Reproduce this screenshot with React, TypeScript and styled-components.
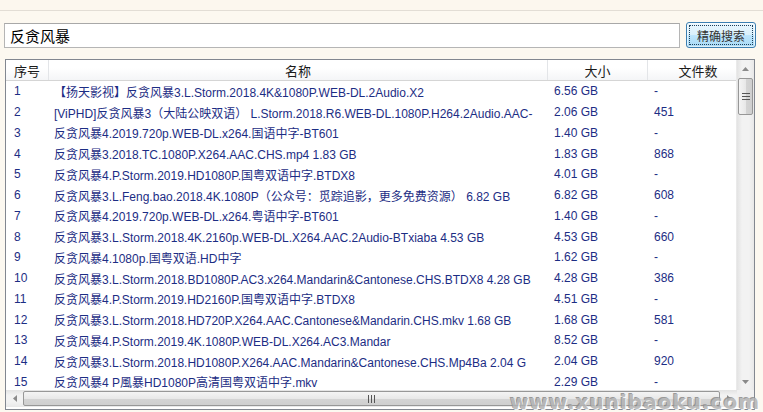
import React from "react";
import styled, { createGlobalStyle } from "styled-components";

interface ResultItem {
  name: string;
  size: string;
  files: string;
}

const results: ResultItem[] = [
  { name: "【扬天影视】反贪风暴3.L.Storm.2018.4K&1080P.WEB-DL.2Audio.X2", size: "6.56 GB", files: "-" },
  { name: "[ViPHD]反贪风暴3（大陆公映双语） L.Storm.2018.R6.WEB-DL.1080P.H264.2Audio.AAC-", size: "2.06 GB", files: "451" },
  { name: "反贪风暴4.2019.720p.WEB-DL.x264.国语中字-BT601", size: "1.40 GB", files: "-" },
  { name: "反贪风暴3.2018.TC.1080P.X264.AAC.CHS.mp4 1.83 GB", size: "1.83 GB", files: "868" },
  { name: "反贪风暴4.P.Storm.2019.HD1080P.国粤双语中字.BTDX8", size: "4.01 GB", files: "-" },
  { name: "反贪风暴3.L.Feng.bao.2018.4K.1080P（公众号：觅踪追影，更多免费资源） 6.82 GB", size: "6.82 GB", files: "608" },
  { name: "反贪风暴4.2019.720p.WEB-DL.x264.粤语中字-BT601", size: "1.40 GB", files: "-" },
  { name: "反贪风暴3.L.Storm.2018.4K.2160p.WEB-DL.X264.AAC.2Audio-BTxiaba 4.53 GB", size: "4.53 GB", files: "660" },
  { name: "反贪风暴4.1080p.国粤双语.HD中字", size: "1.62 GB", files: "-" },
  { name: "反贪风暴3.L.Storm.2018.BD1080P.AC3.x264.Mandarin&Cantonese.CHS.BTDX8 4.28 GB", size: "4.28 GB", files: "386" },
  { name: "反贪风暴4.P.Storm.2019.HD2160P.国粤双语中字.BTDX8", size: "4.51 GB", files: "-" },
  { name: "反贪风暴3.L.Storm.2018.HD720P.X264.AAC.Cantonese&Mandarin.CHS.mkv 1.68 GB", size: "1.68 GB", files: "581" },
  { name: "反贪风暴4.P.Storm.2019.4K.1080P.WEB-DL.X264.AC3.Mandar", size: "8.52 GB", files: "-" },
  { name: "反贪风暴3.L.Storm.2018.HD1080P.X264.AAC.Mandarin&Cantonese.CHS.Mp4Ba 2.04 G", size: "2.04 GB", files: "920" },
  { name: "反贪风暴4 P風暴HD1080P高清国粤双语中字.mkv", size: "2.29 GB", files: "-" },
];

const App: React.FC = () => {
  return (
    <>
      <GlobalStyle />
      <Page>
        <TopStrip />
        <SearchBar>
          <SearchInput defaultValue="反贪风暴" />
          <SearchButton>
            <FocusRing>精确搜索</FocusRing>
          </SearchButton>
        </SearchBar>
        <ListBox>
          <ListMain>
            <ListContent>
              <HeaderRow>
                <HeaderCell>序号</HeaderCell>
                <HeaderCell>名称</HeaderCell>
                <HeaderCell>大小</HeaderCell>
                <HeaderCell last>文件数</HeaderCell>
              </HeaderRow>
              {results.map((r, i) => (
                <Row key={i}>
                  <Cell>{i + 1}</Cell>
                  <Cell>{r.name}</Cell>
                  <Cell>{r.size}</Cell>
                  <Cell>{r.files}</Cell>
                </Row>
              ))}
            </ListContent>
            <VScroll>
              <ArrowBox>
                <svg width="7" height="4" viewBox="0 0 7 4">
                  <path d="M0 4 L3.5 0 L7 4 Z" fill="#8a8a8a" />
                </svg>
              </ArrowBox>
              <VThumb>
                <Grip vertical />
              </VThumb>
              <Spacer />
              <ArrowBox>
                <svg width="7" height="4" viewBox="0 0 7 4">
                  <path d="M0 0 L3.5 4 L7 0 Z" fill="#8a8a8a" />
                </svg>
              </ArrowBox>
            </VScroll>
          </ListMain>
          <HScrollRow>
            <HScroll>
              <HArrowBox>
                <svg width="4" height="7" viewBox="0 0 4 7">
                  <path d="M4 0 L0 3.5 L4 7 Z" fill="#8a8a8a" />
                </svg>
              </HArrowBox>
              <HThumb>
                <Grip />
              </HThumb>
              <HArrowBox>
                <svg width="4" height="7" viewBox="0 0 4 7">
                  <path d="M0 0 L4 3.5 L0 7 Z" fill="#8a8a8a" />
                </svg>
              </HArrowBox>
            </HScroll>
            <Corner />
          </HScrollRow>
        </ListBox>
        <Watermark>www.xunibaoku.com</Watermark>
      </Page>
    </>
  );
};

const Grip: React.FC<{ vertical?: boolean }> = ({ vertical }) =>
  vertical ? (
    <svg width="8" height="7" viewBox="0 0 8 7">
      <path d="M0 0.5 H8 M0 3.5 H8 M0 6.5 H8" stroke="#555" strokeWidth="1" />
    </svg>
  ) : (
    <svg width="7" height="8" viewBox="0 0 7 8">
      <path d="M0.5 0 V8 M3.5 0 V8 M6.5 0 V8" stroke="#555" strokeWidth="1" />
    </svg>
  );

const GlobalStyle = createGlobalStyle`
  html, body {
    margin: 0;
    padding: 0;
    background: #fcf8f0;
  }
  body {
    font-family: "Liberation Sans", "Noto Sans CJK SC", sans-serif;
  }
`;

const Page = styled.div`
  position: relative;
  width: 763px;
  height: 412px;
  overflow: hidden;
  background: #fcf8f0;
  display: flex;
  flex-direction: column;
`;

const TopStrip = styled.div`
  height: 10px;
  border-bottom: 1px solid #e2ddd5;
  background: #fcf7ee;
`;

const SearchBar = styled.div`
  display: flex;
  align-items: center;
  gap: 6px;
  padding: 11px 7px 0 4px;
`;

const SearchInput = styled.input`
  flex: 1;
  height: 25px;
  box-sizing: border-box;
  border: 1px solid #b5b5b5;
  border-top-color: #a8a8a8;
  background: #fff;
  padding: 0 5px;
  font-family: "Liberation Sans", "Noto Sans CJK SC", sans-serif;
  font-size: 15px;
  color: #000;
  outline: none;
`;

const SearchButton = styled.button`
  width: 70px;
  height: 26px;
  box-sizing: border-box;
  padding: 2px;
  border: 1px solid #3c7fb1;
  border-radius: 3px;
  background: linear-gradient(#eaf6fd 0%, #d9f0fc 50%, #bee6fd 51%, #a7d9f5 100%);
  box-shadow: inset 0 0 0 1px rgba(255, 255, 255, 0.6);
  cursor: pointer;
`;

const FocusRing = styled.span`
  display: flex;
  align-items: center;
  justify-content: center;
  height: 100%;
  box-sizing: border-box;
  border: 1px dotted #1e3f5a;
  font-family: "Noto Sans CJK SC", sans-serif;
  font-size: 12px;
  color: #333;
`;

const ListBox = styled.div`
  margin: 11px 0 0 5px;
  width: 750px;
  height: 351px;
  box-sizing: border-box;
  border: 1px solid #828790;
  background: #fff;
  display: flex;
  flex-direction: column;
`;

const ListMain = styled.div`
  flex: 1;
  display: flex;
  min-height: 0;
`;

const ListContent = styled.div`
  flex: 1;
  overflow: hidden;
  display: flex;
  flex-direction: column;
`;

const columns = "43px 499px 100px 100px";

const HeaderRow = styled.div`
  display: grid;
  grid-template-columns: ${columns};
  height: 20px;
  flex: none;
  background: linear-gradient(#ffffff 0%, #ffffff 40%, #f4f5f7 100%);
  border-bottom: 1px solid #d5d5d5;
`;

const HeaderCell = styled.div<{ last?: boolean }>`
  display: flex;
  align-items: center;
  justify-content: center;
  font-family: "Noto Sans CJK SC", sans-serif;
  font-size: 13px;
  color: #1a1a1a;
  border-right: ${({ last }) => (last ? "none" : "1px solid #e3e5e8")};
`;

const Row = styled.div`
  display: grid;
  grid-template-columns: ${columns};
  height: 20.75px;
  flex: none;
  align-items: center;
`;

const Cell = styled.div`
  padding-left: 6px;
  white-space: nowrap;
  overflow: hidden;
  font-size: 12px;
  color: #1c2d84;
  &:first-child {
    padding-left: 8px;
  }
  &:nth-child(2) {
    padding-left: 5px;
  }
`;

const VScroll = styled.div`
  width: 17px;
  flex: none;
  display: flex;
  flex-direction: column;
  background: linear-gradient(90deg, #e3e3e3, #f2f2f2 30%, #f2f2f2 70%, #e8e8e8);
  border-left: 1px solid #eaeaea;
`;

const ArrowBox = styled.div`
  height: 17px;
  display: flex;
  align-items: center;
  justify-content: center;
`;

const VThumb = styled.div`
  height: 37px;
  margin: 1px 1px 0 1px;
  box-sizing: border-box;
  border: 1px solid #979797;
  border-radius: 2px;
  background: linear-gradient(90deg, #f4f4f4 0%, #e8e8e8 50%, #d4d4d4 51%, #cfcfcf 100%);
  display: flex;
  align-items: center;
  justify-content: center;
`;

const Spacer = styled.div`
  flex: 1;
`;

const HScrollRow = styled.div`
  display: flex;
  height: 17px;
  flex: none;
  margin-bottom: 2px;
`;

const HScroll = styled.div`
  flex: 1;
  display: flex;
  background: linear-gradient(#e3e3e3, #f2f2f2 30%, #f2f2f2 70%, #e8e8e8);
`;

const HArrowBox = styled.div`
  width: 17px;
  display: flex;
  align-items: center;
  justify-content: center;
`;

const HThumb = styled.div`
  flex: 1;
  margin: 1px 0;
  box-sizing: border-box;
  border: 1px solid #979797;
  border-radius: 2px;
  background: linear-gradient(#f4f4f4 0%, #e8e8e8 50%, #d4d4d4 51%, #cfcfcf 100%);
  display: flex;
  align-items: center;
  justify-content: center;
`;

const Corner = styled.div`
  width: 17px;
  background: #f0f0f0;
`;

const Watermark = styled.div`
  position: absolute;
  right: 3px;
  bottom: 0;
  font-family: "DejaVu Sans", sans-serif;
  font-weight: bold;
  font-size: 20px;
  line-height: 20px;
  letter-spacing: 1px;
  color: #b3b3b3;
  text-shadow: 1px 1px 0 #fff, -1px -1px 0 #8c8c8c;
  opacity: 0.85;
  pointer-events: none;
`;

export default App;
